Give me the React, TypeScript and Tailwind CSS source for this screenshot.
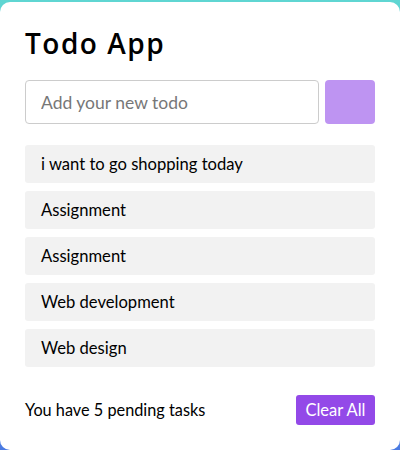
import { useState } from 'react';

const initialTodos = [
  'i want to go shopping today',
  'Assignment',
  'Assignment',
  'Web development',
  'Web design',
];

export default function App() {
  const [todos, setTodos] = useState<string[]>(initialTodos);
  const [text, setText] = useState('');

  const addTodo = () => {
    if (!text.trim()) return;
    setTodos([...todos, text.trim()]);
    setText('');
  };

  return (
    <div
      className="min-h-[450px] w-[400px] bg-gradient-to-b from-[#5fd6d2] to-[#4a7ae2] pt-[2px]"
      style={{ fontFamily: 'Lato, "Open Sans", sans-serif' }}
    >
      <div className="h-[448px] rounded-[10px] bg-white px-[25px] pt-[21px]">
        <h1
          className="text-[28px] font-semibold leading-[40px] tracking-[1.5px] text-black"
          style={{ fontFamily: '"Open Sans", sans-serif' }}
        >
          Todo App
        </h1>

        {/* input row */}
        <div className="mt-[17px] flex gap-[6px]">
          <input
            value={text}
            onChange={(e) => setText(e.target.value)}
            placeholder="Add your new todo"
            className="h-[44px] flex-1 rounded-[4px] border border-[#cccccc] px-[15px] text-[17.5px] text-black outline-none placeholder:text-[#777777]"
          />
          <button
            onClick={addTodo}
            className="h-[44px] w-[50px] rounded-[4px] bg-[#be94f2]"
          />
        </div>

        {/* todo list */}
        <ul className="mt-[21px] flex flex-col gap-[8px]">
          {todos.map((todo, i) => (
            <li
              key={i}
              className="flex h-[38px] items-center rounded-[3px] bg-[#f2f2f2] px-[16px] text-[16.6px] text-black"
            >
              {todo}
            </li>
          ))}
        </ul>

        {/* footer */}
        <div className="mt-[28px] flex items-center justify-between">
          <span className="text-[16.3px] text-black">
            You have {todos.length} pending tasks
          </span>
          <button
            onClick={() => setTodos([])}
            className="h-[30px] rounded-[3px] bg-[#9349e8] px-[9.5px] text-[16.5px] text-white"
          >
            Clear All
          </button>
        </div>
      </div>
    </div>
  );
}
